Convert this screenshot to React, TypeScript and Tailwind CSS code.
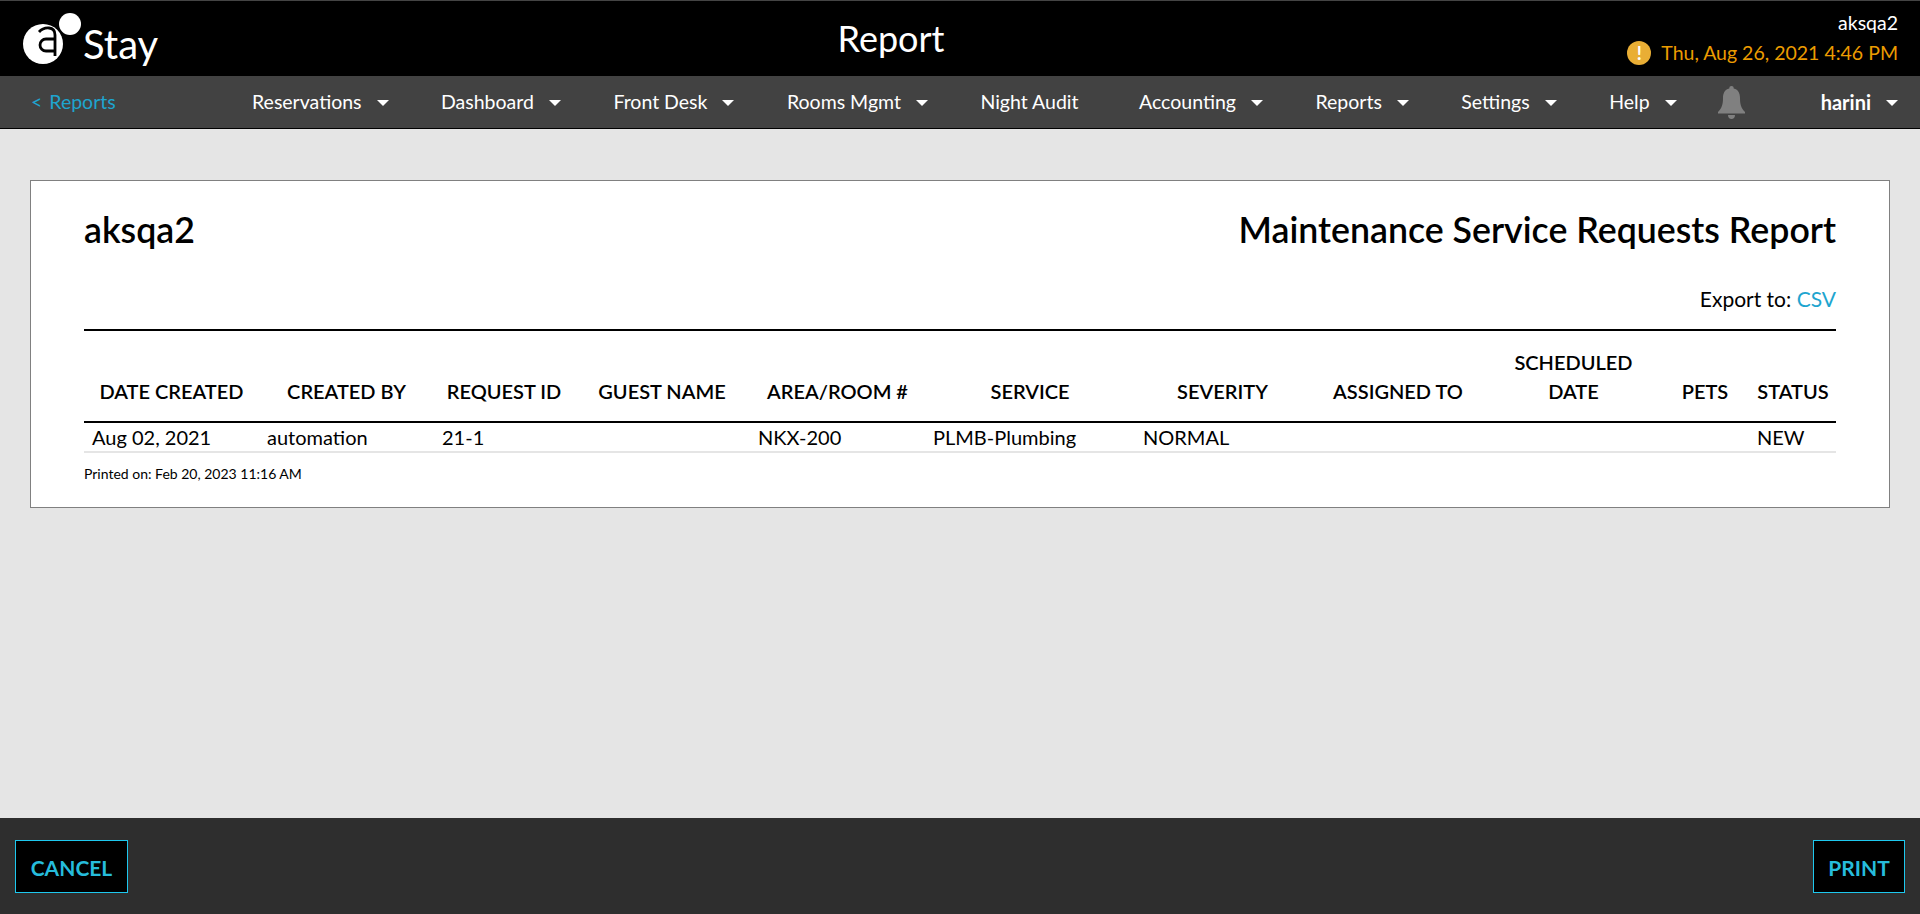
function Caret() {
  return <span className="ml-[15px] inline-block w-0 h-0 border-x-[6px] border-x-transparent border-t-[6px] border-t-white translate-y-[1px]" />;
}

const navItems: [string, boolean, string][] = [
  ["Reservations", true, ""],
  ["Dashboard", true, ""],
  ["Front Desk", true, ""],
  ["Rooms Mgmt", true, ""],
  ["Night Audit", false, ""],
  ["Accounting", true, "ml-[8px]"],
  ["Reports", true, ""],
  ["Settings", true, ""],
  ["Help", true, ""],
];

const headers = [
  "DATE CREATED",
  "CREATED BY",
  "REQUEST ID",
  "GUEST NAME",
  "AREA/ROOM #",
  "SERVICE",
  "SEVERITY",
  "ASSIGNED TO",
  "SCHEDULED DATE",
  "PETS",
  "STATUS",
];

const cells = ["Aug 02, 2021", "automation", "21-1", "", "NKX-200", "PLMB-Plumbing", "NORMAL", "", "", "", "NEW"];

const cols = "grid grid-cols-[175px_175px_140px_176px_175px_210px_175px_176px_175px_88px_88px]";

function Logo() {
  return (
    <svg width="60" height="52" viewBox="0 0 60 52" className="block">
      <circle cx="20" cy="31" r="20" fill="#fff" />
      <circle cx="47" cy="11" r="11" fill="#fff" />
      <path d="M16 19 Q20 14.5 26 15 Q32 15.5 32 22 V43" fill="none" stroke="#000" strokeWidth="2.8" />
      <path d="M32 26 H23 A6 6 0 1 0 23 38 H32" fill="none" stroke="#000" strokeWidth="2.8" />
    </svg>
  );
}

function Bell() {
  return (
    <svg width="27" height="33" viewBox="0 0 27 33" className="block ml-[41px]" fill="#808080">
      <path d="M13.5 0 a2.2 2.2 0 0 1 2.2 2.4 C20.5 3.5 22 7.5 22 12 C22 18 23 22 27 26 V27.5 H0 V26 C4 22 5 18 5 12 C5 7.5 6.5 3.5 11.3 2.4 A2.2 2.2 0 0 1 13.5 0 Z M10 29 H17 C17 31.5 15.5 33 13.5 33 C11.5 33 10 31.5 10 29 Z" />
    </svg>
  );
}

export default function App() {
  return (
    <div className="h-[914px] flex flex-col bg-[#e5e5e5] text-black font-['Lato',sans-serif] overflow-hidden">
      <header className="h-[76px] shrink-0 bg-black border-t border-t-[#444] flex items-start text-white relative">
        <div className="flex items-start pl-[23px] pt-[12px] w-[300px]">
          <Logo />
          <span className="text-[40px] leading-[50px] mt-[6px] font-normal">Stay</span>
        </div>
        <div className="absolute left-[691px] w-[400px] top-[15px] text-center text-[36px] leading-[44px]">Report</div>
        <div className="ml-auto pr-[22px] pt-[11px] flex flex-col items-end">
          <div className="text-[19.5px] leading-[22px]">aksqa2</div>
          <div className="flex items-center mt-[6px]">
            <span className="w-6 h-6 rounded-full bg-[#e9ae35] text-white font-bold text-[18px] leading-6 text-center mr-[10px]">!</span>
            <span className="text-[19.5px] leading-[26px] text-[#ec9c00]">Thu, Aug 26, 2021 4:46 PM</span>
          </div>
        </div>
      </header>

      <nav className="h-[53px] shrink-0 bg-[#424242] border-b border-b-black flex items-center text-white text-[19.5px] relative">
        <a className="pl-[31px] w-[252px] text-[#1ea5cf]">
          <span className="mr-[7px]">&lt;</span>Reports
        </a>
        <div className="flex items-center gap-[52.5px]">
          {navItems.map(([label, caret, extra]) => (
            <span key={label} className={"flex items-center whitespace-nowrap " + extra}>
              {label}
              {caret && <Caret />}
            </span>
          ))}
        </div>
        <Bell />
        <span className="ml-auto pr-[22px] flex items-center font-bold text-[20px]">
          harini
          <Caret />
        </span>
      </nav>

      <main className="flex-1 px-[30px] pt-[51px]">
        <section className="bg-white border border-[#808080] h-[328px] px-[53px] pt-[26px]">
          <div className="flex justify-between items-start text-[35.7px] leading-[45px] font-semibold">
            <h1>aksqa2</h1>
            <h2>Maintenance Service Requests Report</h2>
          </div>
          <div className="text-right text-[21px] leading-[24px] mt-[35px]">
            Export to: <span className="text-[#1ea5cf]">CSV</span>
          </div>
          <div className="mt-[18px] border-t-2 border-black">
            <div className={cols + " border-b-2 border-black items-end text-[20px] leading-[29px] font-semibold text-center pt-[17px] pb-[15px]"}>
              {headers.map((h) => (
                <div key={h} className="px-[8px]">{h}</div>
              ))}
            </div>
            <div className={cols + " border-b-2 border-[#e5e5e5] text-[20px] leading-[28px]"}>
              {cells.map((c, i) => (
                <div key={i} className="px-[8px] whitespace-nowrap">{c}</div>
              ))}
            </div>
          </div>
          <p className="text-[14px] leading-[16px] mt-[13px]">Printed on: Feb 20, 2023 11:16 AM</p>
        </section>
      </main>

      <footer className="h-[96px] shrink-0 bg-[#2e2e2e] flex items-center justify-between px-[15px]">
        <button className="h-[53px] w-[113px] pt-[4px] bg-black border border-[#1ec8ee] text-[#26bcdc] text-[21px] font-bold">CANCEL</button>
        <button className="h-[53px] w-[92px] pt-[4px] bg-black border border-[#1ec8ee] text-[#26bcdc] text-[21px] font-bold">PRINT</button>
      </footer>
    </div>
  );
}
